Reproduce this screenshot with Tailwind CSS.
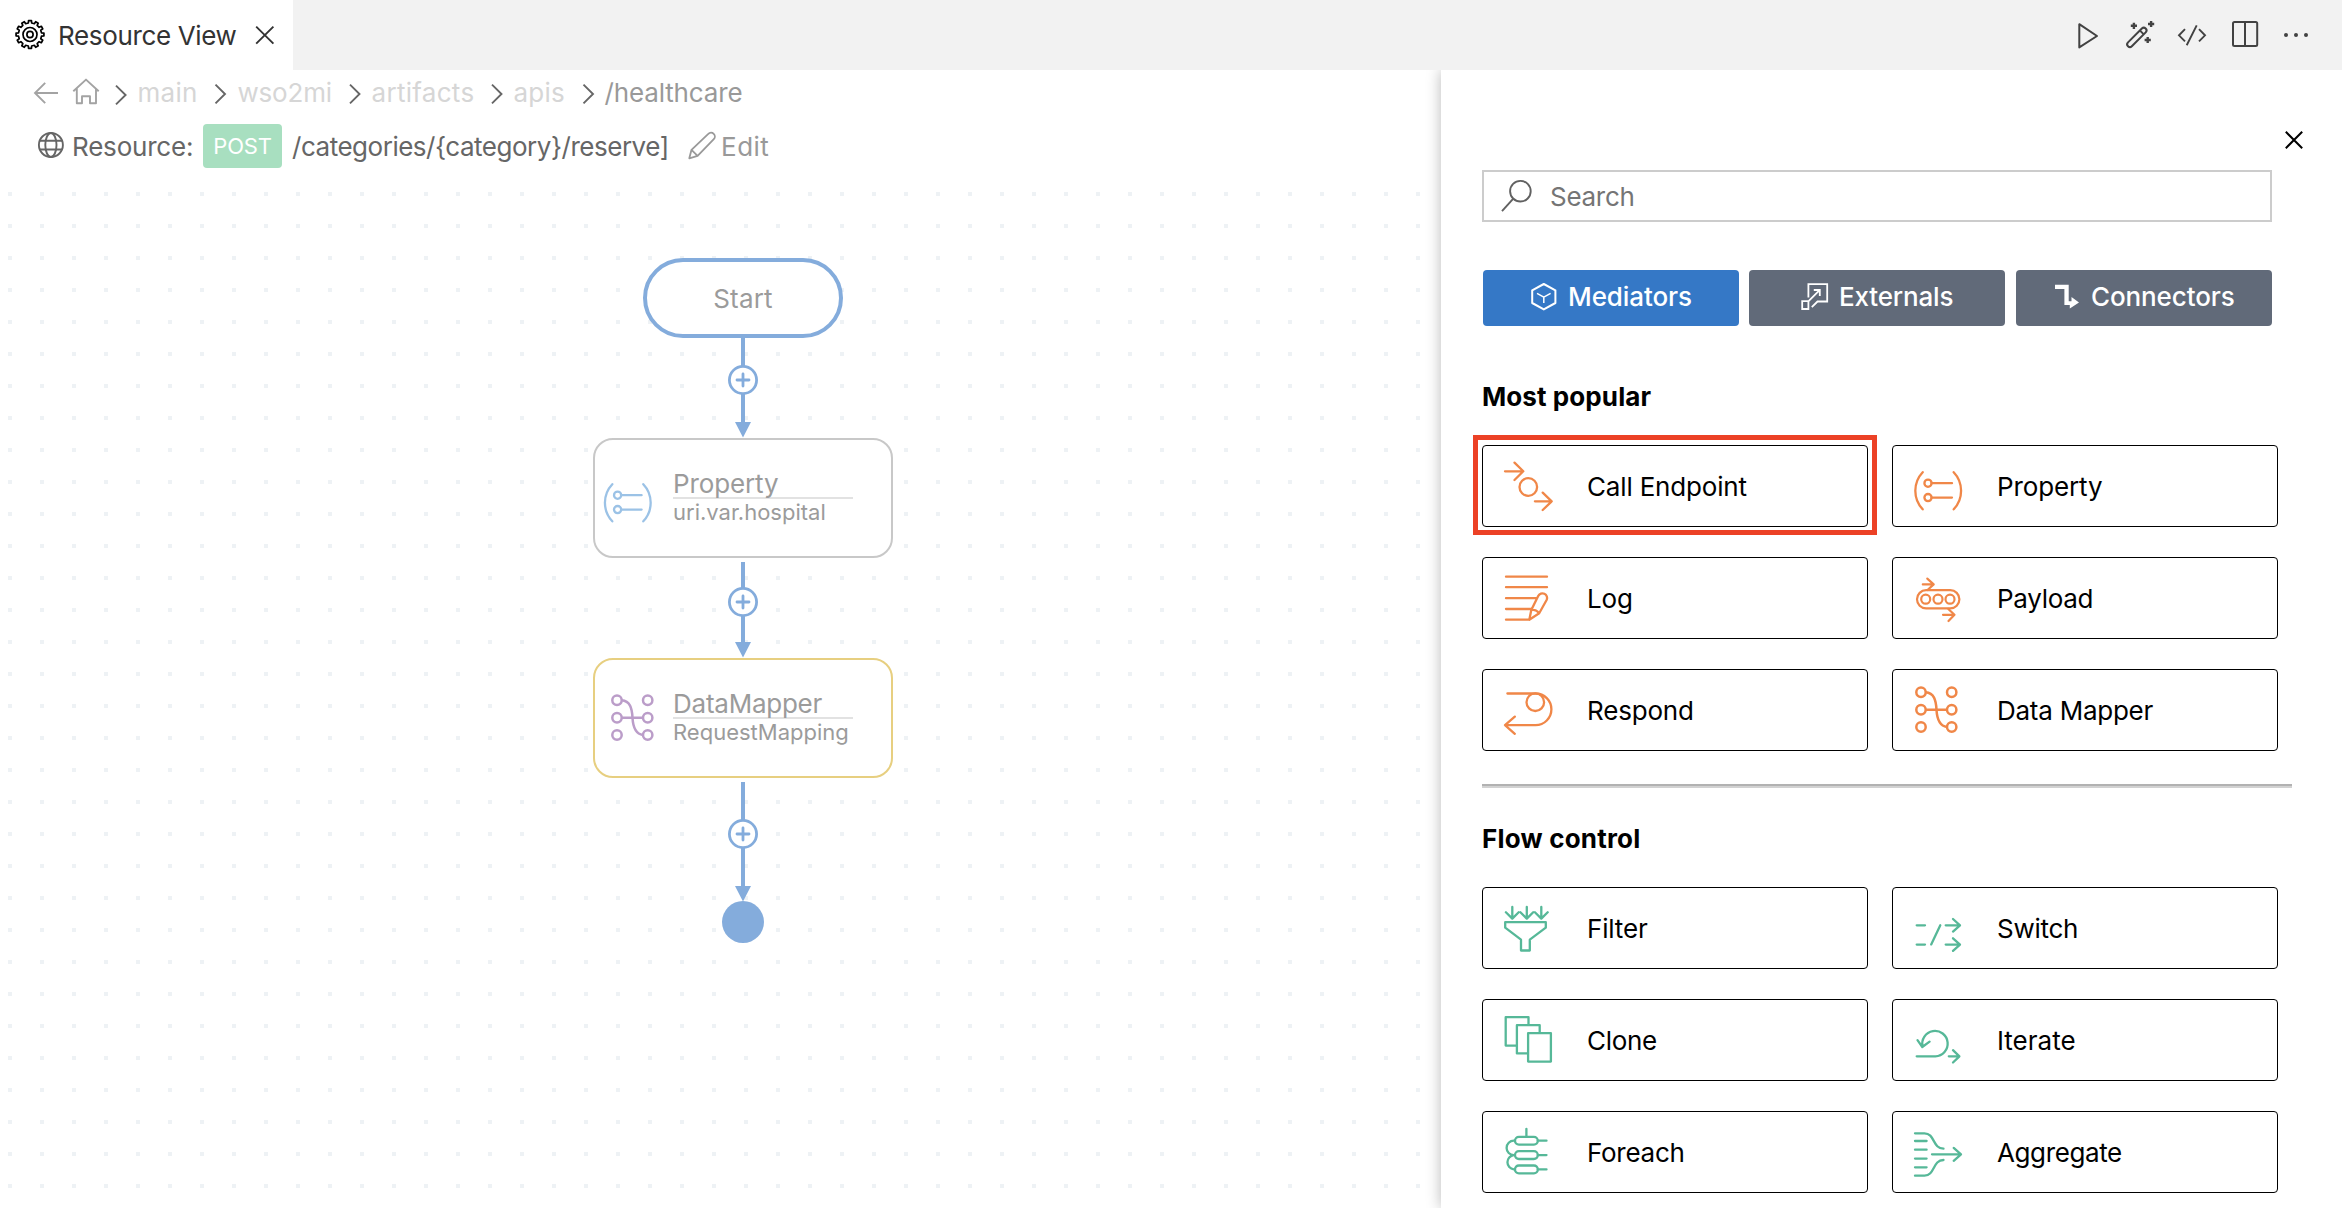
<!DOCTYPE html>
<html lang="en">
<head>
<meta charset="utf-8">
<title>Resource View</title>
<script src="https://cdn.jsdelivr.net/npm/@tailwindcss/browser@4"></script>
</head>
<body class="h-[1208px] w-[2342px] overflow-hidden bg-white font-['Inter',sans-serif] text-[26px] leading-8 text-black">

<header class="flex h-[70px] justify-between bg-[#f2f2f2]">
  <div class="flex h-[70px] w-[293px] items-center whitespace-nowrap bg-white">
    <svg class="h-[70px] w-[58px] shrink-0" viewBox="0 0 58 70" fill="none" stroke="#000" stroke-width="1.7" stroke-linejoin="round"><path id="gear"/><circle cx="30" cy="34.5" r="7"/><circle cx="30" cy="34.5" r="3.1"/></svg>
    <span class="w-[194px] pt-0.5 tracking-[-0.36px] text-[#333]">Resource View</span>
    <svg class="h-[70px] w-[30px] shrink-0" viewBox="252 0 30 70" fill="none" stroke="#333" stroke-width="1.9"><path d="M256.2 26.6L273.4 43.6M273.4 26.6L256.2 43.6"/></svg>
  </div>
  <div class="mr-5 flex">
    <svg class="h-[70px] w-13" viewBox="2062 0 52 70" fill="none" stroke="#424242" stroke-width="2" stroke-linejoin="round"><path d="M2079.3 24.2V47.4L2097 36Z"/></svg>
    <svg class="h-[70px] w-13" viewBox="2114 0 52 70" fill="none" stroke="#424242" stroke-width="2"><rect x="-11.6" y="-2.7" width="25" height="5.4" rx="2.7" transform="translate(2136.2 38) rotate(-45)"/><path d="M2140 30.6l3.8 3.8"/><path stroke-width="2.4" d="M2130.8 25.8h6.2M2133.9 22.7v6.2M2148 24h6.2M2151.1 20.9v6.2M2144.6 40h6.2M2147.7 36.9v6.2"/></svg>
    <svg class="h-[70px] w-13" viewBox="2166 0 52 70" fill="none" stroke="#424242" stroke-width="1.9"><path d="M2185 29.2L2179 35.3L2185 41.4M2196.7 25.4L2186.7 45.2M2199 29.2L2205 35.3L2199 41.4"/></svg>
    <svg class="h-[70px] w-13" viewBox="2218 0 52 70" fill="none" stroke="#424242" stroke-width="2"><rect x="2233" y="22" width="24.2" height="24" rx="1.5"/><path d="M2245 22V46"/></svg>
    <svg class="h-[70px] w-13" viewBox="2270 0 52 70" fill="#424242"><circle cx="2286" cy="35" r="2"/><circle cx="2296" cy="35" r="2"/><circle cx="2306" cy="35" r="2"/></svg>
  </div>
</header>

<main class="flex h-[1138px]">
  <section class="flex w-[1441px] shrink-0 flex-col">
    <nav class="flex h-[45px] items-center whitespace-nowrap pl-8 text-[#d6d6d6]">
      <svg class="h-[45px] w-7 shrink-0" viewBox="32 70 28 45" fill="none" stroke="#a3a3a3" stroke-width="1.9"><path d="M58 93H35M45.2 82.8L35 93L45.2 103.2"/></svg>
      <svg class="ml-3 h-[45px] w-7 shrink-0" viewBox="72 70 28 45" fill="none" stroke="#a3a3a3" stroke-width="1.9" stroke-linejoin="round"><path d="M73.3 91.3L86 79.6L98.7 91.3M76.8 88.3V103.3H82V96.2H90V103.3H96V88.3"/></svg>
      <svg class="ml-3.5 h-[45px] w-3.5 shrink-0" viewBox="114 70 14 45" fill="none" stroke="#666" stroke-width="1.9"><path d="M116 85.6L125.6 95L116 104.4"/></svg>
      <span class="w-[86px] pl-[9.5px] tracking-[0.3px]">main</span>
      <svg class="h-[45px] w-3.5 shrink-0" viewBox="114 70 14 45" fill="none" stroke="#666" stroke-width="1.9"><path d="M115.5 84.6L125 94L115.5 103.4"/></svg>
      <span class="w-[120px] pl-[9.5px] tracking-[-0.2px]">wso2mi</span>
      <svg class="h-[45px] w-3.5 shrink-0" viewBox="114 70 14 45" fill="none" stroke="#666" stroke-width="1.9"><path d="M116 84.6L125.5 94L116 103.4"/></svg>
      <span class="w-[128px] pl-[9.5px] tracking-[0.3px]">artifacts</span>
      <svg class="h-[45px] w-3.5 shrink-0" viewBox="114 70 14 45" fill="none" stroke="#666" stroke-width="1.9"><path d="M116 84.6L125.5 94L116 103.4"/></svg>
      <span class="w-[77px] pl-[9.5px] tracking-[0.23px]">apis</span>
      <svg class="h-[45px] w-3.5 shrink-0" viewBox="114 70 14 45" fill="none" stroke="#666" stroke-width="1.9"><path d="M116.5 84.6L126 94L116.5 103.4"/></svg>
      <span class="pl-[9.5px] tracking-[-0.14px] text-[#999]">/healthcare</span>
    </nav>

    <div class="mt-[9px] flex h-11 items-center whitespace-nowrap pl-9 text-[#666]">
      <svg class="h-11 w-9 shrink-0" viewBox="36 124 36 44" fill="none" stroke="#666" stroke-width="1.9"><circle cx="50.9" cy="145" r="12"/><ellipse cx="50.9" cy="145" rx="5.6" ry="12"/><path d="M39.8 140.7H62M39.8 149.5H62"/></svg>
      <span class="w-[131px] pt-0.5 tracking-[-0.2px]">Resource:</span>
      <span class="flex h-11 w-[79px] items-center justify-center rounded-[4px] bg-[#a8dfc0] text-[22px] tracking-[-0.2px] text-white">POST</span>
      <span class="w-[404px] pl-2.5 pt-0.5 tracking-[-0.48px]">/categories/{category}/reserve]</span>
      <svg class="h-11 w-[35px] shrink-0" viewBox="686 124 35 44" fill="none" stroke="#999" stroke-width="1.8" stroke-linejoin="round"><path d="M689.3 158.3L691.5 149.8L708.3 133.9A3.7 3.7 0 0 1 713.8 139.2L697.6 155.9ZM691.5 149.8L697.6 155.9"/></svg>
      <span class="pt-0.5 tracking-[0.5px] text-[#999]">Edit</span>
    </div>

    <!-- Flow canvas: dotted grid with 32px pitch -->
    <div class="relative mt-4 flex-1 overflow-hidden">
      <svg class="absolute inset-0 h-full w-full" viewBox="0 184 1441 1024">
        <defs><pattern id="dots" x="8" y="192" width="32" height="32" patternUnits="userSpaceOnUse"><rect width="4" height="4" fill="#eef2f5"/></pattern></defs>
        <rect x="0" y="184" width="1441" height="1024" fill="url(#dots)"/>
        <g fill="#84acdc">
          <path d="M741 338h4v84h6l-8 15.5l-8-15.5h6z"/>
          <path d="M741 562h4v80h6l-8 15.5l-8-15.5h6z"/>
          <path d="M741 782h4v104h6l-8 15.5l-8-15.5h6z"/>
          <circle cx="743" cy="922" r="21"/>
        </g>
        <g fill="#fff" stroke="#84acdc" stroke-width="2.8">
          <circle cx="743" cy="380" r="13.6"/><circle cx="743" cy="602" r="13.6"/><circle cx="743" cy="834" r="13.6"/>
          <path stroke-linecap="round" d="M737 380h12M743 374v12M737 602h12M743 596v12M737 834h12M743 828v12"/>
        </g>
      </svg>
      <div class="absolute left-[643px] top-[74px] flex h-20 w-[200px] items-center justify-center rounded-full border-4 border-[#84acdc] bg-white pt-px tracking-[0.2px] text-[#9b9b9b]">Start</div>

      <div class="absolute left-[593px] top-[254px] flex h-[120px] w-[300px] rounded-[20px] border-2 border-[#c8c8c8] bg-white text-[#9b9b9b]">
        <svg class="h-[116px] w-[78px] shrink-0" viewBox="13.4 -17 78 116" fill="none" stroke="#9bc2e6" stroke-width="2.3" stroke-linecap="round"><path d="M30.7 27.2A27 27 0 0 0 30.7 64.3M61.7 27.2A27 27 0 0 1 61.7 64.3M39.6 38.2H60M39.6 52.6H60"/><circle cx="36" cy="38.2" r="3.6"/><circle cx="36" cy="52.6" r="3.6"/></svg>
        <div class="flex w-[180px] flex-col pt-[27px]">
          <span class="h-8 border-b-2 border-[#e2e2e2] leading-[34px] tracking-[-0.12px]">Property</span>
          <span class="text-[22px] leading-[26px]">uri.var.hospital</span>
        </div>
      </div>

      <div class="absolute left-[593px] top-[474px] flex h-[120px] w-[300px] rounded-[20px] border-2 border-[#e7cf80] bg-white text-[#9b9b9b]">
        <svg class="h-[116px] w-[78px] shrink-0" viewBox="7 -17 78 116" fill="none" stroke="#bb9dc9" stroke-width="2.5"><circle cx="29" cy="23.3" r="4.7"/><circle cx="29" cy="40.7" r="4.7"/><circle cx="29" cy="58" r="4.7"/><circle cx="59.7" cy="23.3" r="4.7"/><circle cx="59.7" cy="40.7" r="4.7"/><circle cx="59.7" cy="58" r="4.7"/><path d="M33.7 40.7H55M33.7 23.3C42 24 44 31 44.5 40.7S48 57 55 58"/></svg>
        <div class="flex w-[180px] flex-col pt-[27px]">
          <span class="h-8 border-b-2 border-[#e2e2e2] leading-[34px] tracking-[-0.24px]">DataMapper</span>
          <span class="text-[22px] leading-[26px]">RequestMapping</span>
        </div>
      </div>
    </div>
  </section>

  <aside class="relative flex flex-1 flex-col bg-white pl-[41px] shadow-[0_0_14px_rgba(0,0,0,0.28)] [clip-path:inset(0_0_0_-30px)]">
    <div class="flex h-[100px] justify-end">
      <svg class="h-[100px] w-[60px]" viewBox="2264 70 60 100" fill="none" stroke="#000" stroke-width="2"><path d="M2285.8 131.8L2302.2 148.2M2302.2 131.8L2285.8 148.2"/></svg>
      <span class="w-[18px]"></span>
    </div>
    <div class="flex h-[52px] w-[790px] items-center border-2 border-[#ccc] text-[#757575]">
      <svg class="h-12 w-[66px] shrink-0" viewBox="1484 172 66 48" fill="none" stroke="#616161" stroke-width="1.9"><circle cx="1520.4" cy="191.2" r="10.3"/><path d="M1513.3 198.6L1502 211.2"/></svg>
      <span class="pt-0.5 tracking-[-0.28px]">Search</span>
    </div>

    <div class="ml-px mt-12 flex h-14 w-[789px] font-medium text-white">
      <div class="flex h-14 w-64 items-start rounded-[4px] bg-[#3578c6]">
        <svg class="h-14 w-[85px] shrink-0" viewBox="1483 270 85 56" fill="none" stroke="#fff" stroke-width="2" stroke-linejoin="round"><path d="M1543.8 284L1555.4 290.3V303L1543.8 309.4L1532.2 303V290.3Z"/><path stroke-width="1.5" d="M1537 293.4L1543.8 297.2L1550.6 293.4M1543.8 297.2V303"/></svg>
        <span class="pt-[11px] tracking-[-0.09px]">Mediators</span>
      </div>
      <div class="ml-2.5 flex h-14 w-64 items-start rounded-[4px] bg-[#616a79]">
        <svg class="h-14 w-[90px] shrink-0" viewBox="1749 270 90 56" fill="none" stroke="#fff" stroke-width="1.8"><path d="M1808.4 297.5V284.2H1827.2V301.5H1817.5L1811.8 307.2M1802.2 301.2H1808.4V309H1802.2ZM1808.6 301.2L1819.6 290.2M1813.8 290H1819.8V296"/></svg>
        <span class="pt-[11px] tracking-[-0.17px]">Externals</span>
      </div>
      <div class="ml-[11px] flex h-14 w-64 items-start rounded-[4px] bg-[#616a79]">
        <svg class="h-14 w-[75px] shrink-0" viewBox="2016 270 75 56" fill="#fff"><path d="M2055 284.8H2068.7V301.2H2071.5V297L2079 302.6L2069.8 308.4V305H2064.4V289H2055Z"/></svg>
        <span class="pt-[11px] tracking-[-0.11px]">Connectors</span>
      </div>
    </div>

    <h2 class="mt-[55px] font-bold leading-8 tracking-[0.09px]">Most popular</h2>
    <div class="mt-[32px] grid w-[796px] grid-cols-2 gap-x-6 gap-y-[30px] [&>div]:flex [&>div]:h-[82px] [&>div]:items-center [&>div]:rounded-[4px] [&>div]:border [&>div]:border-black [&>div>span]:pt-0.5 [&_svg]:h-20 [&_svg]:w-[104px] [&_svg]:shrink-0">
      <div class="relative"><svg viewBox="1 1 104 80" fill="none" stroke="#f08748" stroke-width="2.3" stroke-linecap="round" stroke-linejoin="round"><path d="M23 26.3H41.3M32.5 17.6L41.3 26.3L32.5 35M52.9 56.3H69.7M60.7 47.6L69.7 56.3L60.7 65"/><circle cx="46.3" cy="42" r="8.8"/></svg><span class="tracking-[-0.17px]">Call Endpoint</span>
        <span class="absolute -inset-x-[10px] -bottom-[9px] -top-[11px] border-[5px] border-[#ec4126]"></span></div>
      <div><svg viewBox="1 1 104 80" fill="none" stroke="#f08748" stroke-width="2.3" stroke-linecap="round"><path d="M30.7 27.2A27 27 0 0 0 30.7 64.3M61.7 27.2A27 27 0 0 1 61.7 64.3M39.6 38.2H60M39.6 52.6H60"/><circle cx="36" cy="38.2" r="3.6"/><circle cx="36" cy="52.6" r="3.6"/></svg><span class="tracking-[-0.12px]">Property</span></div>
      <div><svg viewBox="1 1 104 80" fill="none" stroke="#f08748" stroke-width="2.3" stroke-linecap="round" stroke-linejoin="round"><path d="M24 19.7H65M24 30.2H65M24 41.2H54.5M24 52H49M24 62.7H47.3L49.3 53L56.2 39A4.6 4.6 0 0 1 64.6 43L57.2 56.3L47.3 62.7M49.3 53C52 52.4 55.5 53.6 57 56.3"/></svg><span class="tracking-[-0.15px]">Log</span></div>
      <div><svg viewBox="1 1 104 80" fill="none" stroke="#f08748" stroke-width="2.2" stroke-linecap="round" stroke-linejoin="round"><rect x="25" y="33.2" width="42.4" height="18.2" rx="9.1"/><circle cx="33.7" cy="42.2" r="4.5"/><circle cx="46" cy="42.2" r="4.5"/><circle cx="58" cy="42.2" r="4.5"/><path d="M30.8 27.4H41.5M35.3 21.6L41.7 27.4L35.5 33M51 57.8H62.4M56.3 52L62.5 57.8L56.5 64"/></svg><span class="tracking-[-0.3px]">Payload</span></div>
      <div><svg viewBox="1 1 104 80" fill="none" stroke="#f08748" stroke-width="2.3" stroke-linecap="round" stroke-linejoin="round"><path d="M25.4 24.5H53.6A15.8 15.8 0 0 1 53.6 56.1H23M32.8 47.6L23 56.1L32.8 64.8"/><circle cx="53.3" cy="33.2" r="8.8"/></svg><span class="tracking-[-0.18px]">Respond</span></div>
      <div><svg viewBox="1 1 104 80" fill="none" stroke="#f08748" stroke-width="2.5"><circle cx="29" cy="23.3" r="4.7"/><circle cx="29" cy="40.7" r="4.7"/><circle cx="29" cy="58" r="4.7"/><circle cx="59.7" cy="23.3" r="4.7"/><circle cx="59.7" cy="40.7" r="4.7"/><circle cx="59.7" cy="58" r="4.7"/><path d="M33.7 40.7H55M33.7 23.3C42 24 44 31 44.5 40.7S48 57 55 58"/></svg><span class="tracking-[-0.25px]">Data Mapper</span></div>
    </div>

    <div class="mt-[33px] h-1 w-[810px] border-b-2 border-t-2 border-b-[#d2d2d2] border-t-[#b2b2b2]"></div>

    <h2 class="mt-[35px] font-bold leading-8 tracking-[0.2px]">Flow control</h2>
    <div class="mt-[32px] grid w-[796px] grid-cols-2 gap-x-6 gap-y-[30px] [&>div]:flex [&>div]:h-[82px] [&>div]:items-center [&>div]:rounded-[4px] [&>div]:border [&>div]:border-black [&>div>span]:pt-0.5 [&_svg]:h-20 [&_svg]:w-[104px] [&_svg]:shrink-0">
      <div><svg viewBox="1 1 104 80" fill="none" stroke="#56b898" stroke-width="2.3" stroke-linecap="round" stroke-linejoin="round"><path d="M30.3 20V31.4M23.9 25.2L30.3 31.6L36.7 25.2M44.8 20V31.4M38.4 25.2L44.8 31.6L51.2 25.2M59.3 20V31.4M52.9 25.2L59.3 31.6L65.7 25.2M23.2 35.2H63.8V40.7L47.8 52.7V63.5H39V52.7L23.2 40.7Z"/></svg><span class="tracking-[-0.15px]">Filter</span></div>
      <div><svg viewBox="1 1 104 80" fill="none" stroke="#56b898" stroke-width="2.3" stroke-linecap="round" stroke-linejoin="round"><path d="M24.7 38.3H33M24.7 57.6H33M39.2 57.4L48.3 38.3M53.7 38.3H68M61 32L68 38.3L61 44.6M53.7 57.6H68M61 51.3L68 57.6L61 63.9"/></svg><span class="tracking-[-0.27px]">Switch</span></div>
      <div><svg viewBox="1 1 104 80" fill="#fff" stroke="#56b898" stroke-width="2.3" stroke-linejoin="round"><rect x="23.7" y="18.2" width="22.8" height="28.4"/><rect x="34.9" y="26.2" width="22.8" height="28.2"/><rect x="46.1" y="34.2" width="22.8" height="28.4"/></svg><span class="tracking-[-0.31px]">Clone</span></div>
      <div><svg viewBox="1 1 104 80" fill="none" stroke="#56b898" stroke-width="2.3" stroke-linecap="round" stroke-linejoin="round"><path d="M24.7 57.3H43.4A12.7 12.7 0 1 0 30.6 47.5M25.5 41.2L30.3 48L37.6 42.6M56.8 57.3H67.3M61 51.2L67.4 57.3L61 63.5"/></svg><span>Iterate</span></div>
      <div><svg viewBox="1 1 104 80" fill="none" stroke="#56b898" stroke-width="2.3" stroke-linecap="round"><rect x="33" y="25.8" width="22.8" height="7.8" rx="3.9"/><rect x="33" y="40.2" width="22.8" height="7.8" rx="3.9"/><rect x="33" y="54.5" width="22.8" height="7.8" rx="3.9"/><path d="M44.4 17.8V25.8M55.8 29.7H64.5M55.8 44.1H64.5M55.8 58.4H64.5M33 29.7H31.8A7.2 7.2 0 0 0 31.8 44.1H33M31.8 44.1A7.2 7.2 0 0 0 31.8 58.4H33"/></svg><span class="tracking-[-0.27px]">Foreach</span></div>
      <div><svg viewBox="1 1 104 80" fill="none" stroke="#56b898" stroke-width="2.3" stroke-linecap="round" stroke-linejoin="round"><path d="M23 22.3H32.5C43 22.3 40.5 37.7 51.5 37.7M23 30H34.6M23 38.7H34.6M23 47.6H34.6M23 56.3H34.6M23 64.7H32.5C43 64.7 40.5 49 51.5 49M40 43.3H69M61.7 36.9L69 43.3L61.7 49.8"/></svg><span class="tracking-[-0.39px]">Aggregate</span></div>
    </div>
  </aside>
</main>

<script>
  // Outline of the 12-toothed gear in the tab
  const teeth = 12, pts = [];
  for (let i = 0; i < teeth; i++) {
    for (const [f, r] of [[-0.27, 11.6], [-0.2, 14], [0.2, 14], [0.27, 11.6]]) {
      const a = ((i + f) / teeth) * 2 * Math.PI - Math.PI / 2;
      pts.push((30 + r * Math.cos(a)).toFixed(2) + ' ' + (34.5 + r * Math.sin(a)).toFixed(2));
    }
  }
  document.getElementById('gear').setAttribute('d', 'M' + pts.join('L') + 'Z');
</script>
</body>
</html>
